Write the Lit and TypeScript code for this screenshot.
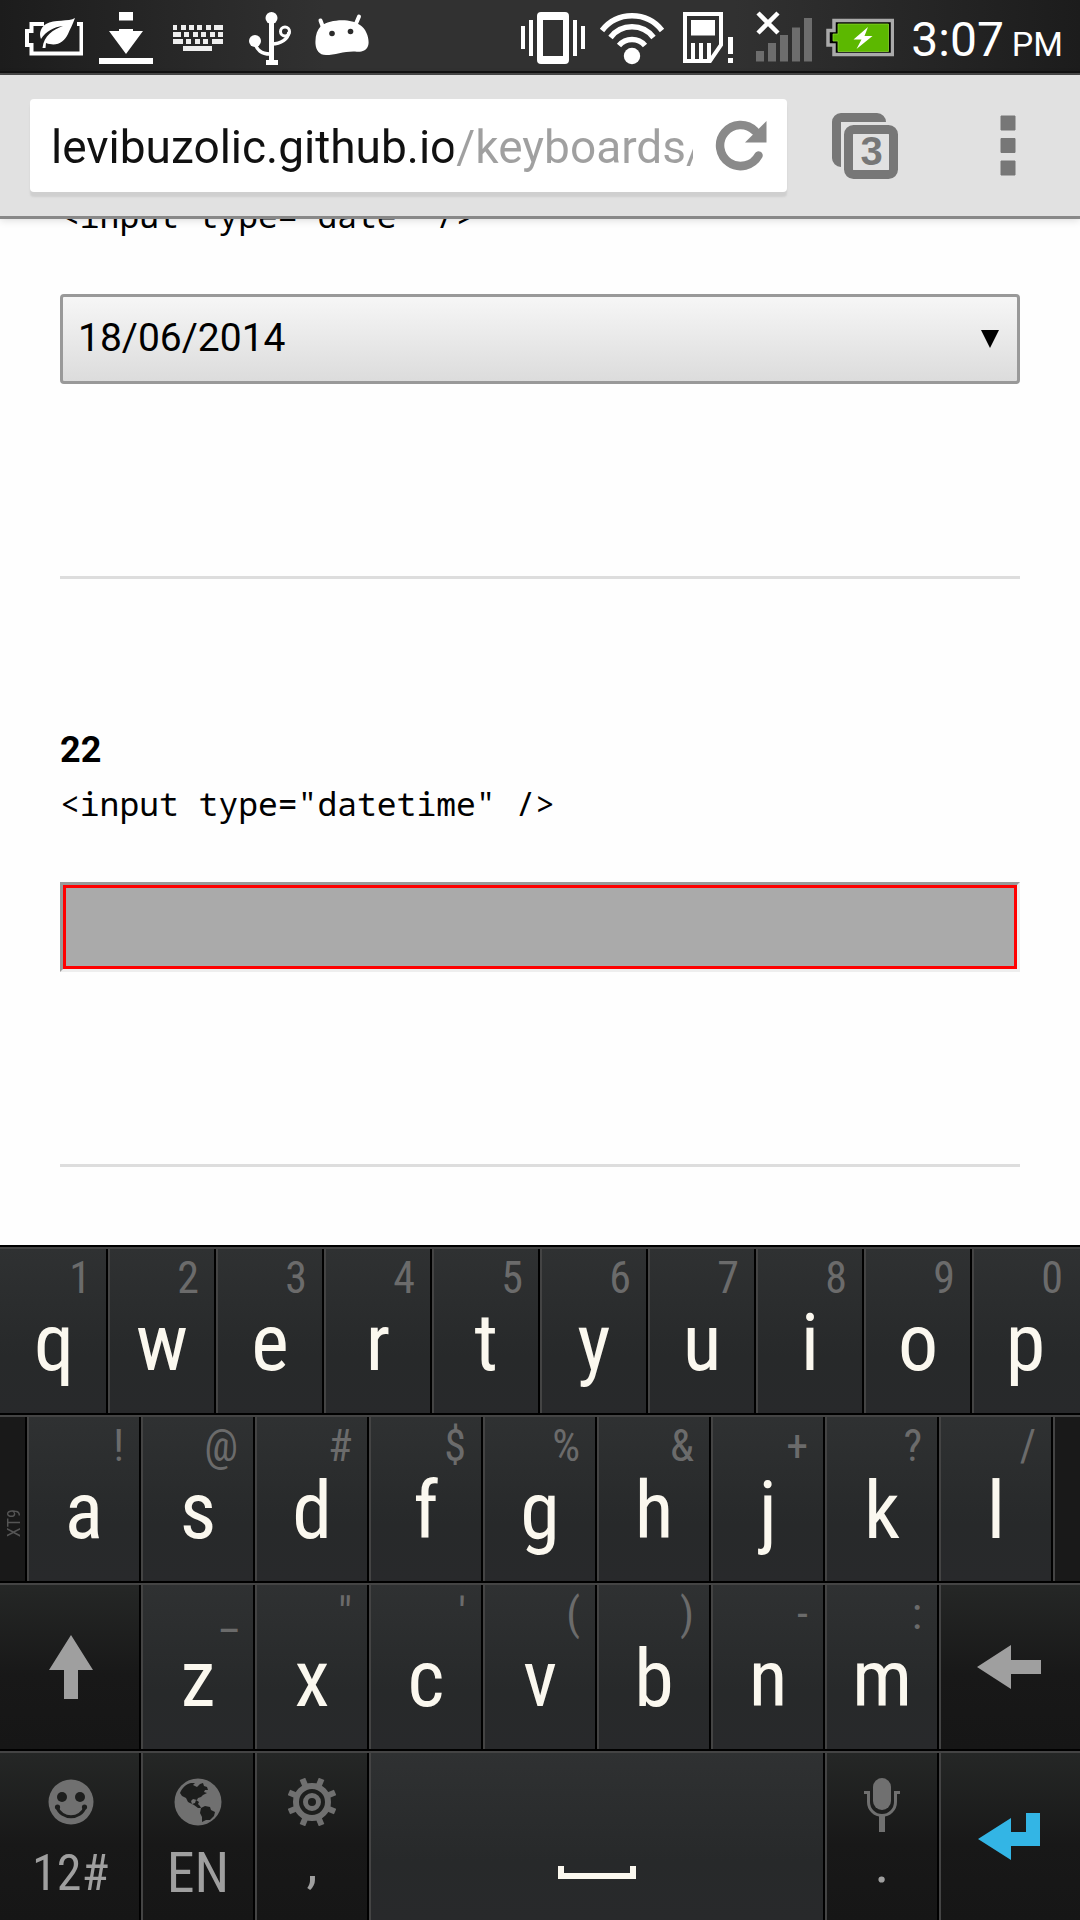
import { LitElement, html, svg, css, nothing, TemplateResult } from "lit";
import { customElement } from "lit/decorators.js";

type Key = { main?: string; hint?: string; kind?: string; label?: string; top?: TemplateResult; icon?: TemplateResult };

/** Status icons share one 72px tall canvas; x and w pick their horizontal slice of it. */
const status = (x: number, w: number, body: TemplateResult) =>
  html`<svg class="status-icon" width=${w} height="72" viewBox="${x} 0 ${w} 72" aria-hidden="true">${body}</svg>`;

const batterySaver = status(25, 58, svg`
  <path d="M44 24H31.500V31H27V45H31.500V53.500H81.500V24H77" fill="none" stroke="#fff" stroke-width="4"/>
  <path d="M75 18C69 22 54 19 46 24C40 28 39 34 41 39C46 31 54 27 63 26C53 30 44 35 42.500 48H45.500L46 43C57 47 64 42 68 34C70 29 73 24 75 18Z" fill="#fff"/>`);
const download = status(99, 54, svg`
  <path d="M119 12H133V20.500H119ZM119 29H133V31H143L126 54L109 31H119ZM99 58H153V64H99Z" fill="#fff"/>`);
const keyboard = status(169, 57, svg`
  <g fill="#eee"><path d="M173 25h4v5h-4zM181 25h5v5h-5zM189 25h5v5h-5zM197 25h5v5h-5zM206 25h5v5h-5zM214 25h9v5h-9z
  M173 32h8v5h-8zM184 32h5v5h-5zM193 32h5v5h-5zM201 32h5v5h-5zM210 32h5v5h-5zM218 32h5v5h-5z
  M173 39h10v5h-10zM186 39h5v5h-5zM195 39h5v5h-5zM203 39h5v5h-5zM212 39h11v5h-11zM183 46h29v5h-29z"/></g>`);
const usb = status(242, 57, svg`
  <g fill="#fff"><circle cx="271.500" cy="18" r="6"/><rect x="269" y="18" width="5" height="45"/>
  <rect x="266" y="60" width="12" height="5"/><circle cx="255" cy="41" r="6"/></g>
  <circle cx="285" cy="31.500" r="4.500" fill="none" stroke="#fff" stroke-width="3"/>
  <path d="M255 42C256 50 262 54 270 54M272 44C281 44 288 39 289 32" fill="none" stroke="#fff" stroke-width="3.500"/>`);
const android = status(315, 54, svg`
  <path d="M324 30L320.500 20.500M355 26L359 16.500" stroke="#fff" stroke-width="4" stroke-linecap="round"/>
  <path d="M321 26C330 19 351 18 360 25C367 29 370 41 368 46C366 52 360 52 355 51.500C345 51 335 55 326 55C319 55 316 50 315.500 44C315 36 317 30 321 26Z" fill="#fff"/>
  <circle cx="332" cy="33.500" r="2.800" fill="#2b2b2b"/><circle cx="350.500" cy="31.500" r="2.800" fill="#2b2b2b"/>`);
const vibrate = status(520, 66, svg`
  <path fill-rule="evenodd" d="M541 12H565Q569 12 569 16V60Q569 64 565 64H541Q537 64 537 60V16Q537 12 541 12ZM543 20V56H563V20Z
  M521 26H525V49H521ZM529 20H533V56H529ZM573 20H577V56H573ZM581 26H585V49H581Z" fill="#fff"/>`);
const wifi = status(599, 66, svg`
  <circle cx="632" cy="56" r="8.200" fill="#fff"/>
  <g fill="none" stroke="#fff" stroke-width="5.500"><path d="M602 30.500A38 38 0 0 1 662 30.500M610.500 37.500A27 27 0 0 1 653.500 37.500M619 45.500A17 17 0 0 1 645 45.500"/></g>`);
const sim = status(678, 60, svg`
  <path d="M685 14H721V45L710 61H685Z" fill="none" stroke="#fff" stroke-width="4"/>
  <path d="M691 20H715V35.500H691ZM691 43H695V61H691ZM699 43H703V61H699ZM707 43H711V59L707 61ZM728 37H733V54H728ZM728 58H733V63H728Z" fill="#fff"/>`);
const signal = status(751, 62, svg`
  <path d="M756 51h8v10.500h-8zM768 43h8v18.500h-8zM780 35h8v26.500h-8zM792 27.500h8v34h-8zM804 18h8v43.500h-8z" fill="#6d6d6d"/>
  <path d="M758 13L778 33M778 13L758 33" stroke="#fff" stroke-width="4.500"/>`);
const charging = status(826, 68, svg`
  <path d="M834 20.500H892.500V54.500H834V45H828V30.500H834Z" fill="#000" stroke="#aaa" stroke-width="3.500"/>
  <path d="M838 24H888.500V51.500H838V41H833V34H838Z" fill="#5cb800" stroke="#8ad62f" stroke-width="0.800"/>
  <path d="M868 27L853.500 39.500H861.500L856.500 49L872.500 36H864.500Z" fill="#fff"/>`);

const reload = html`<svg width="54" height="54" viewBox="714 120 54 54" aria-hidden="true">
  <path d="M758.500 156.500A20.500 20.500 0 1 1 755 132" fill="none" stroke="#8a8a8a" stroke-width="8.500" stroke-linecap="round"/>
  <path d="M766.500 122V143.500H745Z" fill="#8a8a8a"/></svg>`;
const tabs = html`<svg width="68" height="68" viewBox="830 113 68 68" aria-hidden="true">
  <path d="M840 168A9 9 0 0 1 831 159V123A9 9 0 0 1 840 114H876A9 9 0 0 1 885 123H840Z" fill="#777"/>
  <rect x="845.500" y="128.500" width="49" height="49" rx="7" fill="none" stroke="#e1e1e1" stroke-width="9"/>
  <rect x="847.500" y="130.500" width="45" height="45" rx="5" fill="#e1e1e1" stroke="#777" stroke-width="9"/>
  <text x="870.500" y="166" text-anchor="middle" class="tab-count">3</text></svg>`;
const menu = html`<svg width="16" height="62" viewBox="0 0 16 62" aria-hidden="true">
  <path d="M1 1h14v14h-14zM1 23.500h14v14h-14zM1 46h14v14h-14z" fill="#777" stroke="#777" stroke-linejoin="round"/></svg>`;

const shift = html`<svg width="44" height="64" viewBox="0 0 44 64" aria-hidden="true"><path d="M22 0L44 35H29V64H15V35H0Z" fill="#9f9f9f"/></svg>`;
const backspace = html`<svg width="64" height="44" viewBox="0 0 64 44" aria-hidden="true"><path d="M0 22L34 0V15H64V29H34V44Z" fill="#9f9f9f"/></svg>`;
const enter = html`<svg width="62" height="47" viewBox="0 0 62 47" aria-hidden="true"><path d="M0 26L33 5V19H48V0H62V33H33V47Z" fill="#33b5e5"/></svg>`;
const space = html`<svg width="78" height="13" viewBox="0 0 78 13" aria-hidden="true"><path d="M0 0H6V7H72V0H78V13H0Z" fill="#fbf8ef"/></svg>`;

const smile = html`<svg width="48" height="48" viewBox="0 0 48 48" aria-hidden="true"><circle cx="24" cy="24" r="22.500" fill="#707070"/>
  <circle cx="15" cy="19" r="5" fill="#1d1e1d"/><circle cx="33" cy="19" r="5" fill="#1d1e1d"/>
  <path d="M10 29C14 42 34 42 38 29" fill="none" stroke="#1d1e1d" stroke-width="3"/><circle cx="10.500" cy="29" r="2.600" fill="#1d1e1d"/><circle cx="37.500" cy="29" r="2.600" fill="#1d1e1d"/></svg>`;
const globe = html`<svg width="48" height="48" viewBox="0 0 48 48" aria-hidden="true"><circle cx="24" cy="24" r="23.500" fill="#707070"/>
  <path d="M6 15C8 10 12 6 17 5L21 5L19 7L23 9L26 6L29 5L30 8L33 9L34 12H31L30 14L33 15L29 17L27 19L24 20L23 22L19 21L17 23L18 26L21 25L22 22L25 24L24 26L26 28L27 30H24L20 27L14 24L12 20L8 18Z" fill="#1c1d1c"/>
  <path d="M27 30L31 28L36 29L37 32L41 34L40 38L36 42L32 42L28 44L28 39L26 35Z" fill="#1c1d1c"/></svg>`;
const gear = html`<svg width="48" height="48" viewBox="0 0 48 48" aria-hidden="true"><g fill="#707070">
  ${[22.5, 67.5, 112.5, 157.5, 202.5, 247.5, 292.5, 337.5].map(a => svg`<rect x="21" y="-1" width="6" height="10" transform="rotate(${a} 24 24)"/>`)}</g>
  <circle cx="24" cy="24" r="16" fill="#1d1e1d" stroke="#707070" stroke-width="6"/>
  <circle cx="24" cy="24" r="6.500" fill="none" stroke="#707070" stroke-width="5"/></svg>`;
const mic = html`<svg width="36" height="54" viewBox="0 0 36 54" aria-hidden="true"><rect x="9" y="0" width="18" height="32" rx="9" fill="#707070"/>
  <path d="M0 14.500H4.500V24A13.500 13.500 0 0 0 31.500 24V14.500H36" fill="none" stroke="#707070" stroke-width="3"/><rect x="15" y="38" width="6" height="16" fill="#707070"/></svg>`;

const letters = (row: string, hints: string): Key[] => [...row].map((main, i) => ({ main, hint: hints[i] }));

const ROWS: { cls: string; keys: Key[] }[] = [
  { cls: "row-ten", keys: letters("qwertyuiop", "1234567890") },
  { cls: "row-nine", keys: [{ kind: "edge", main: "XT9" }, ...letters("asdfghjkl", "!@#$%&+?/"), { kind: "edge", label: "Edge" }] },
  { cls: "row-seven", keys: [{ kind: "dark", label: "Shift", icon: shift }, ...letters("zxcvbnm", "_\"'()-:"), { kind: "dark", label: "Backspace", icon: backspace }] },
  { cls: "row-bottom", keys: [
    { kind: "dark", main: "12#", top: smile },
    { kind: "dark lang", main: "EN", top: globe },
    { kind: "dark mark", main: ",", top: gear },
    { kind: "space", label: "Space", icon: space },
    { kind: "dark mark", main: ".", top: mic },
    { kind: "dark", label: "Enter", icon: enter } ] }
];

@customElement("status-bar")
export class StatusBar extends LitElement {
  static styles = css`
    :host { display: flex; justify-content: space-between; height: 71px; border-bottom: 2px solid #121212; box-shadow: 0 2px #484848; margin-bottom: 2px;
      background: linear-gradient(90deg, #1c1c1c, #313131 30%, #313131 68%, #1c1c1c); color: #fff; font-family: Roboto, sans-serif; }
    .group { display: flex; gap: 16px; padding-left: 25px; }
    .end { gap: 13px; padding: 0 17px 0 0; }
    .status-icon { display: block; flex: none; }
    .clock { display: flex; align-items: baseline; gap: 8px; padding: 12px 0 0 4px; font-size: 48px; line-height: 56px; }
    .meridiem { font-size: 34px; }
  `;
  render() {
    return html`
      <div class="group">${batterySaver}${download}${keyboard}${usb}${android}</div>
      <div class="group end">${vibrate}${wifi}${sim}${signal}${charging}
        <time class="clock" datetime="15:07"><span>3:07</span><span class="meridiem">PM</span></time></div>`;
  }
}

@customElement("browser-bar")
export class BrowserBar extends LitElement {
  static styles = css`
    :host { position: relative; z-index: 1; display: flex; align-items: center; gap: 44px; height: 141px; padding: 0 64px 0 30px;
      background: #e1e1e1; border-bottom: 3px solid #888; box-shadow: 0 1px 8px rgba(0, 0, 0, 0.15); font-family: Roboto, sans-serif; }
    .omnibox { display: flex; align-items: center; flex: 1; min-width: 0; height: 93px; padding: 0 19px 0 21px; background: #fff; border-radius: 4px; box-shadow: 0 5px 2px #cfcfcf; }
    .url { flex: 1; min-width: 0; height: 93px; box-sizing: border-box; border: 0; padding: 3px 0 0; outline: 0; font: 46px/56px Roboto, sans-serif;
      background: linear-gradient(90deg, #111 402px, #a0a0a0 402px); background-clip: text; -webkit-background-clip: text; -webkit-text-fill-color: transparent; }
    .tool { display: flex; justify-content: center; flex: none; border: 0; padding: 0; background: none; }
    .reload { margin-left: 21px; }
    .menu { margin-left: 57px; }
    .tab-count { font: bold 40px "Liberation Sans", sans-serif; fill: #777; }
  `;
  render() {
    return html`
      <div class="omnibox">
        <input class="url" type="text" aria-label="Address" value="levibuzolic.github.io/keyboards/" />
        <button class="tool reload" aria-label="Reload">${reload}</button>
      </div>
      <button class="tool" aria-label="Open tabs">${tabs}</button>
      <button class="tool menu" aria-label="Menu">${menu}</button>`;
  }
}

@customElement("key-board")
export class KeyBoard extends LitElement {
  static styles = css`
    :host { display: flex; flex-direction: column; background: #000; font-family: "Roboto Condensed", Roboto, sans-serif; }
    .row { display: grid; height: 168px; box-sizing: border-box; border-top: 2px solid #000; }
    .row-ten { grid-template-columns: repeat(10, 1fr); }
    .row-nine { grid-template-columns: 27fr repeat(9, 114fr) 27fr; }
    .row-seven { grid-template-columns: 141fr repeat(7, 114fr) 141fr; }
    .row-bottom { grid-template-columns: 141fr 114fr 114fr 456fr 114fr 141fr; height: 171px; }
    .key { position: relative; display: flex; align-items: center; justify-content: center; min-width: 0; padding: 0 2px 0 0; border: solid #444;
      border-width: 2px 0 0 2px; box-shadow: inset -2px 0 #000; font: inherit; color: #fbf8ef;
      background: linear-gradient(#2f3132, #27292a 65%, #28292b); }
    .key:first-child { border-left: 0; padding-right: 0; }
    .key:last-child { box-shadow: none; padding-right: 3px; }
    .dark, .edge { background: linear-gradient(#252726, #181818 55%, #161616); color: #9f9f9f; }
    .edge { background: #191919; }
    .main { font-size: 80px; font-weight: 450; line-height: 94px; padding-top: 24px; }
    .hint { position: absolute; top: 3px; right: 17px; font-size: 44px; font-weight: 450; line-height: 52px; color: #6b6b6b; }
    .edge .main { writing-mode: vertical-rl; transform: rotate(180deg); padding: 0; font-size: 18px; font-weight: 400; line-height: 20px; color: #555; margin-top: 48px; }
    .key.stack { flex-direction: column; justify-content: flex-start; padding-top: 25px; }
    .top { display: flex; height: 54px; }
    .stack .main { font-size: 50px; line-height: 60px; padding-top: 11px; }
    .lang .main { font-size: 56px; font-weight: 400; }
    .mark .main { font-size: 56px; padding-top: 1px; }
    .key.space { align-items: flex-end; padding-bottom: 41px; }
  `;
  render() {
    return ROWS.map(row => html`<div class="row ${row.cls}">${row.keys.map(k => html`
      <button class="key ${k.kind ?? ""} ${k.top ? "stack" : ""}" aria-label=${k.label ?? k.main ?? nothing}>
        ${k.hint ? html`<span class="hint">${k.hint}</span>` : nothing}
        ${k.top ? html`<span class="top">${k.top}</span>` : nothing}
        ${k.main ? html`<span class="main">${k.main}</span>` : nothing}
        ${k.icon ?? nothing}
      </button>`)}</div>`);
  }
}

@customElement("app-root")
export class AppRoot extends LitElement {
  static styles = css`
    :host { display: flex; flex-direction: column; min-height: 100vh; background: #fefefe; color: #000; font-family: Roboto, sans-serif; }
    .page { flex: 1 0 0; min-height: 0; overflow: hidden; padding: 0 60px; }
    .entry { border-bottom: 3px solid #ddd; padding: 149px 0 192px; }
    .scrolled { margin-top: -35px; padding-top: 0; }
    .number { margin: 0; font-size: 36px; line-height: 44px; }
    .code { display: block; padding-top: 8px; font: 33px/48px "Noto Sans Mono", "DejaVu Sans Mono", monospace; }
    .field { display: grid; align-items: center; margin-top: 54px; }
    .date, .text, .arrow { grid-area: 1 / 1; }
    .date { appearance: none; width: 100%; height: 90px; border: 3px solid #999; border-radius: 4px; padding: 0 15px 2px; color: #000;
      background: linear-gradient(#f6f6f6, #dcdcdc); font: 39px/46px Roboto, sans-serif; }
    .arrow { justify-self: end; margin-right: 21px; pointer-events: none; }
    .text { box-sizing: border-box; width: 100%; height: 90px; border: 3px solid; border-color: #999 #eee #eee #999; border-radius: 0; outline: 3px solid #f00; outline-offset: -6px; background: #aaa; }
  `;
  render() {
    return html`
      <status-bar></status-bar>
      <browser-bar></browser-bar>
      <main class="page">
        <section class="entry scrolled">
          <label class="code" for="date">&lt;input type="date" /&gt;</label>
          <div class="field">
            <select class="date" id="date"><option>18/06/2014</option></select>
            <svg class="arrow" width="18" height="18" viewBox="0 0 18 18" aria-hidden="true"><path d="M0 0H18L9 18Z"/></svg>
          </div>
        </section>
        <section class="entry">
          <h2 class="number">22</h2>
          <label class="code" for="datetime">&lt;input type="datetime" /&gt;</label>
          <div class="field"><input class="text" id="datetime" type="text" /></div>
        </section>
      </main>
      <key-board></key-board>`;
  }
}
